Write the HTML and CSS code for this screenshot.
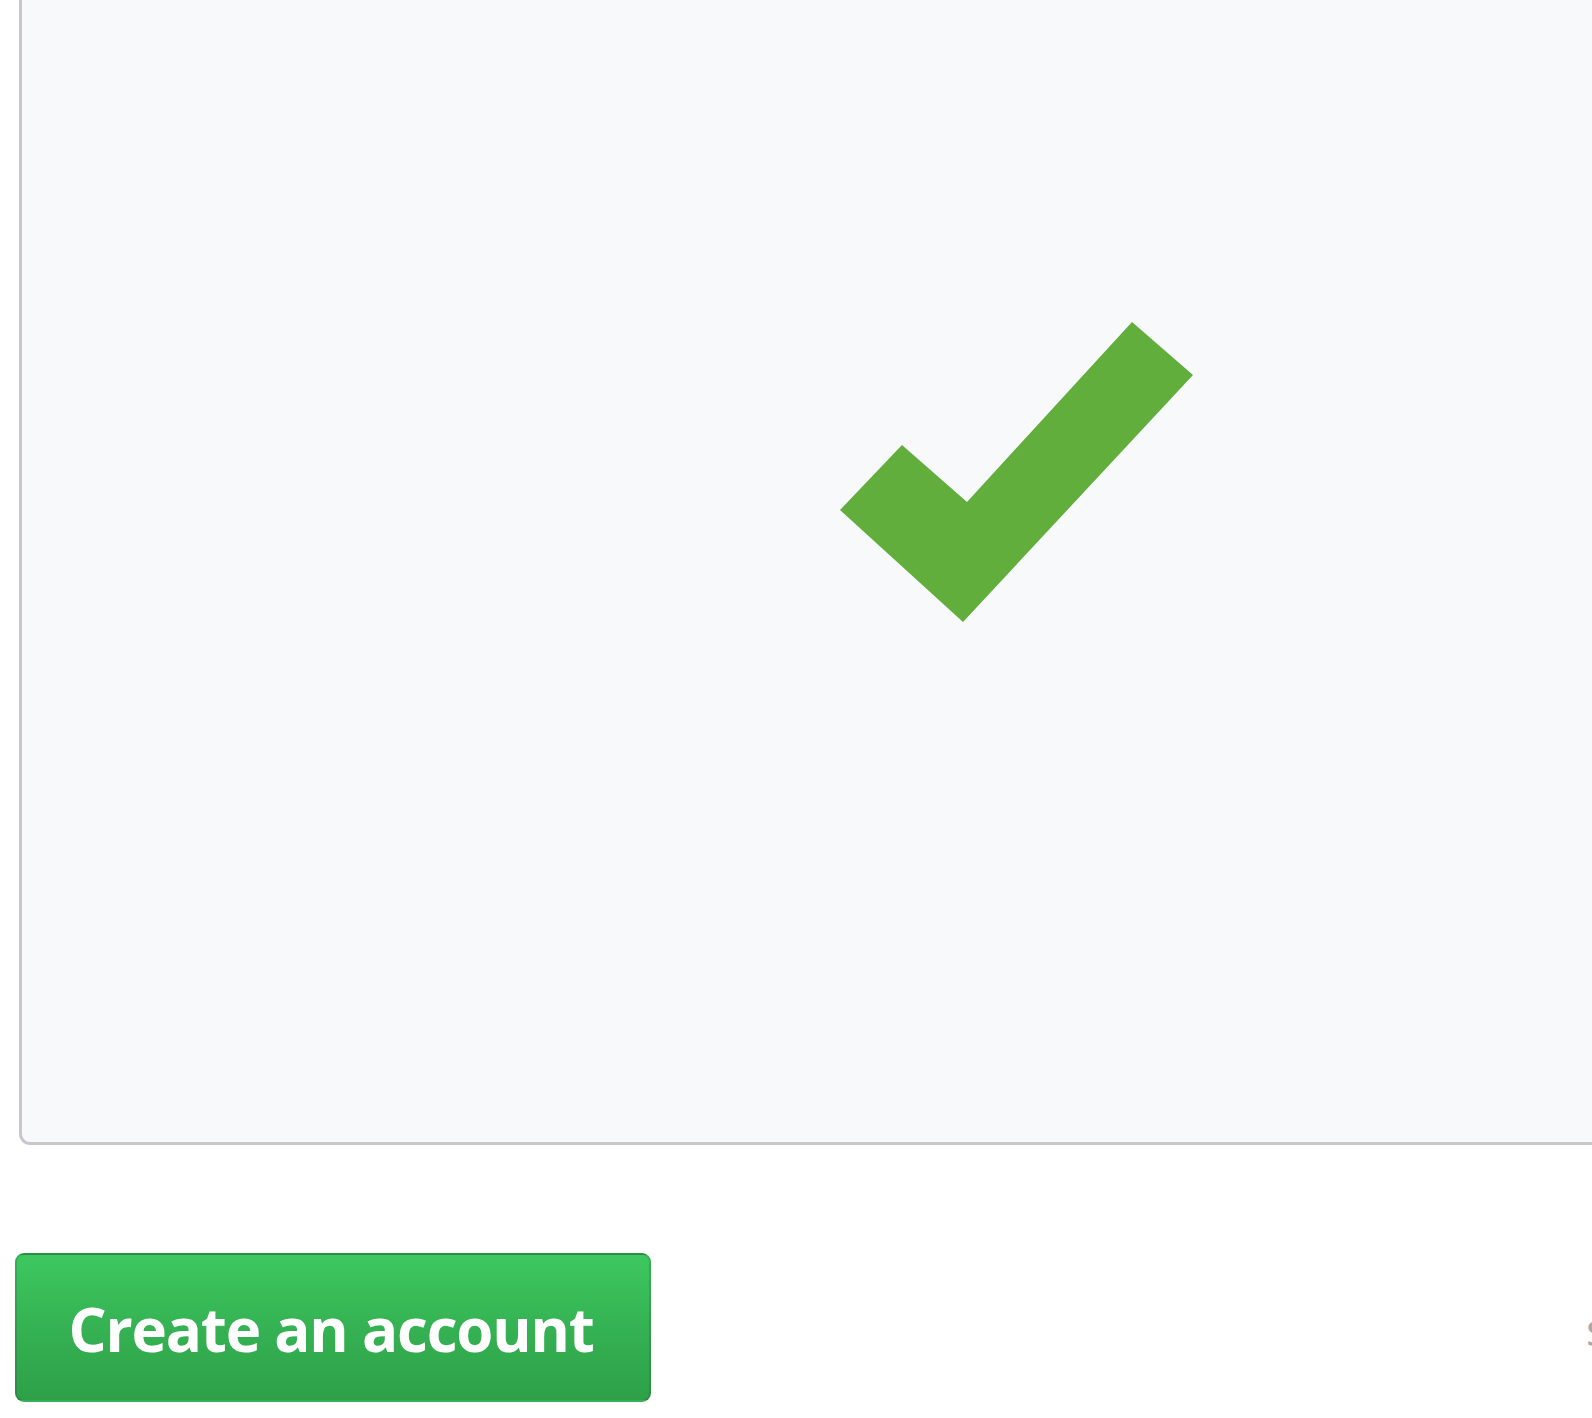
FILE: index.html
```html
<!DOCTYPE html>
<html>
<head>
<meta charset="utf-8">
<link rel="stylesheet" href="styles.css">
</head>
<body>
<div class="page">
  <div class="panel">
    <svg class="check" width="362" height="310" viewBox="0 0 362 310" aria-hidden="true">
      <polygon points="296,4 357,57 127,304 4,192 66,127 131,184" fill="#61ae3c"/>
    </svg>
  </div>
  <div class="actions">
    <button class="btn-primary" type="button">Create an account</button>
    <span class="aside">s</span>
  </div>
</div>
</body>
</html>
```

FILE: styles.css
```css
html, body {
  margin: 0;
  padding: 0;
  background: #ffffff;
  overflow: hidden;
}

.page {
  width: 1592px;
  height: 1418px;
  overflow: hidden;
  font-family: "Open Sans", "Noto Sans", "Liberation Sans", sans-serif;
}

.panel {
  box-sizing: border-box;
  margin: -20px 0 0 19px;
  width: 2000px;
  height: 1165px;
  border: 3px solid #c8c8ca;
  border-radius: 11px;
  background: #f8f9fb;
  padding: 335px 0 0 814px;
}

.check {
  display: block;
}

.actions {
  display: flex;
  align-items: center;
  margin-top: 108px;
  padding-left: 15px;
  width: 1620px;
  gap: 935px;
}

.btn-primary {
  box-sizing: border-box;
  width: 636px;
  height: 149px;
  flex: none;
  border: 2px solid rgba(27, 31, 35, 0.15);
  border-radius: 9px;
  background: linear-gradient(180deg, #3dc85f 0%, #35b253 50%, #2ea048 100%);
  color: #ffffff;
  font-family: "Open Sans", "Noto Sans", sans-serif;
  font-weight: 750;
  font-size: 60px;
  letter-spacing: -1.2px;
  padding: 2px 4px 0 0;
  text-align: center;
  line-height: 1;
}

.aside {
  font-family: "Open Sans", sans-serif;
  font-size: 46px;
  color: #a9a9a9;
}
```
